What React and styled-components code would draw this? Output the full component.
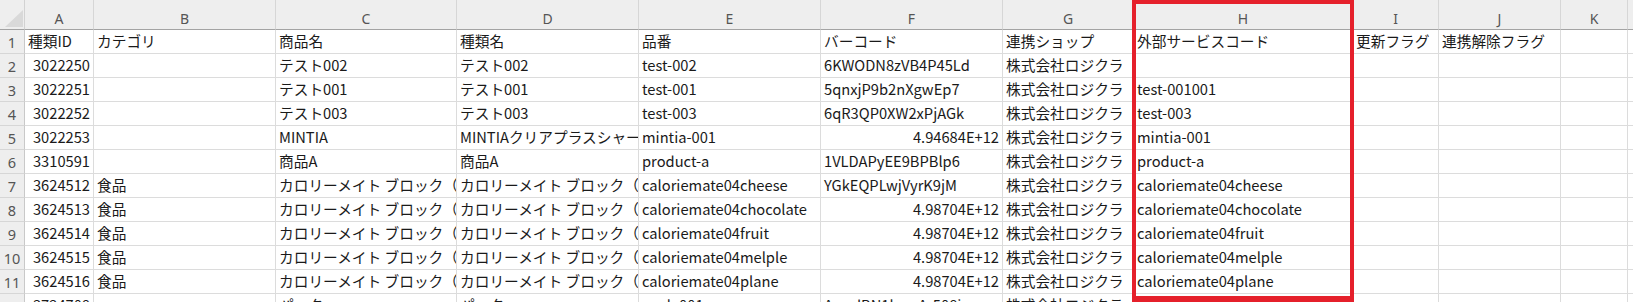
import React from 'react';
import styled, { createGlobalStyle } from 'styled-components';

const GlobalStyle = createGlobalStyle`
  html, body {
    margin: 0;
    padding: 0;
    background: #fff;
  }
  body {
    font-family: "Noto Sans CJK JP", "Noto Sans", sans-serif;
  }
`;

const COLS = [69, 182, 181, 182, 182, 182, 131, 219, 86, 122, 67];
// L is only a sliver at the right edge, its letter is out of view
const LETTERS = ['A', 'B', 'C', 'D', 'E', 'F', 'G', 'H', 'I', 'J', 'K', ''];

// r = right aligned (numbers)
const ROWS = [
  ['種類ID', 'カテゴリ', '商品名', '種類名', '品番', 'バーコード', '連携ショップ', '外部サービスコード', '更新フラグ', '連携解除フラグ'],
  [{ v: '3022250', r: true }, '', 'テスト002', 'テスト002', 'test-002', '6KWODN8zVB4P45Ld', '株式会社ロジクラ', ''],
  [{ v: '3022251', r: true }, '', 'テスト001', 'テスト001', 'test-001', '5qnxjP9b2nXgwEp7', '株式会社ロジクラ', 'test-001001'],
  [{ v: '3022252', r: true }, '', 'テスト003', 'テスト003', 'test-003', '6qR3QP0XW2xPjAGk', '株式会社ロジクラ', 'test-003'],
  [{ v: '3022253', r: true }, '', 'MINTIA', 'MINTIAクリアプラスシャープミント', 'mintia-001', { v: '4.94684E+12', r: true }, '株式会社ロジクラ', 'mintia-001'],
  [{ v: '3310591', r: true }, '', '商品A', '商品A', 'product-a', '1VLDAPyEE9BPBlp6', '株式会社ロジクラ', 'product-a'],
  [{ v: '3624512', r: true }, '食品', 'カロリーメイト ブロック（チーズ味）', 'カロリーメイト ブロック（チーズ味）', 'caloriemate04cheese', 'YGkEQPLwjVyrK9jM', '株式会社ロジクラ', 'caloriemate04cheese'],
  [{ v: '3624513', r: true }, '食品', 'カロリーメイト ブロック（チョコレート味）', 'カロリーメイト ブロック（チョコレート味）', 'caloriemate04chocolate', { v: '4.98704E+12', r: true }, '株式会社ロジクラ', 'caloriemate04chocolate'],
  [{ v: '3624514', r: true }, '食品', 'カロリーメイト ブロック（フルーツ味）', 'カロリーメイト ブロック（フルーツ味）', 'caloriemate04fruit', { v: '4.98704E+12', r: true }, '株式会社ロジクラ', 'caloriemate04fruit'],
  [{ v: '3624515', r: true }, '食品', 'カロリーメイト ブロック（メープル味）', 'カロリーメイト ブロック（メープル味）', 'caloriemate04melple', { v: '4.98704E+12', r: true }, '株式会社ロジクラ', 'caloriemate04melple'],
  [{ v: '3624516', r: true }, '食品', 'カロリーメイト ブロック（プレーン味）', 'カロリーメイト ブロック（プレーン味）', 'caloriemate04plane', { v: '4.98704E+12', r: true }, '株式会社ロジクラ', 'caloriemate04plane'],
  [{ v: '3724708', r: true }, '', 'パック', 'パック', 'pack-001', 'AswdBN1kwuAr508i', '株式会社ロジクラ', ''],
];

const Viewport = styled.div`
  position: relative;
  width: 1633px;
  height: 302px;
  overflow: hidden;
  background: #fff;
`;

const Sheet = styled.div`
  display: grid;
  grid-template-columns: 25px ${COLS.map((w) => `${w}px`).join(' ')} 1fr;
  grid-auto-rows: 24px;
  grid-template-rows: 30px;
`;

const Corner = styled.div`
  position: relative;
  background: #eeeeee;
  border-right: 1px solid #d2d2d2;
  border-bottom: 1px solid #a3a3a3;
  box-sizing: border-box;
`;

const CornerTriangle = styled.svg`
  position: absolute;
  left: 5px;
  top: 10px;
`;

const ColHead = styled.div`
  background: #eeeeee;
  border-right: 1px solid #d6d6d6;
  border-bottom: 1px solid #a3a3a3;
  box-sizing: border-box;
  display: flex;
  align-items: center;
  justify-content: center;
  padding-top: 7px;
  font-family: "Noto Sans", "Liberation Sans", sans-serif;
  font-size: 14px;
  color: #555;
`;

const RowHead = styled.div`
  background: #eeeeee;
  border-right: 1px solid #c9c9c9;
  border-bottom: 1px solid #d6d6d6;
  box-sizing: border-box;
  display: flex;
  align-items: center;
  justify-content: center;
  font-family: "Noto Sans", "Liberation Sans", sans-serif;
  font-size: 14.5px;
  color: #555;
`;

const Cell = styled.div`
  border-right: 1px solid #dcdcdc;
  border-bottom: 1px solid #dcdcdc;
  box-sizing: border-box;
  overflow: hidden;
  white-space: nowrap;
  display: flex;
  align-items: center;
  justify-content: ${(p) => (p.$right ? 'flex-end' : 'flex-start')};
  padding: 0 3px;
  font-size: 14.7px;
  line-height: 1;
  color: #1a1a1a;
`;

const Highlight = styled.div`
  position: absolute;
  left: 1132px;
  top: 0;
  width: 222px;
  height: 302px;
  box-sizing: border-box;
  border: 4px solid #e5202b;
  border-bottom-width: 6px;
  pointer-events: none;
`;

const App = () => {
  return (
    <>
      <GlobalStyle />
      <Viewport>
        <Sheet>
          <Corner>
            <CornerTriangle width="18" height="17" viewBox="0 0 18 17">
              <polygon points="18,0 18,17 0,17" fill="#d9d9d9" />
            </CornerTriangle>
          </Corner>
          {LETTERS.map((l, j) => (
            <ColHead key={j}>{l}</ColHead>
          ))}
          {ROWS.map((row, i) => (
            <React.Fragment key={i}>
              <RowHead>{i + 1}</RowHead>
              {LETTERS.map((l, j) => {
                const c = row[j];
                const val = c && typeof c === 'object' ? c.v : c || '';
                const right = c && typeof c === 'object' && c.r;
                return (
                  <Cell key={j} $right={right}>
                    {val}
                  </Cell>
                );
              })}
            </React.Fragment>
          ))}
        </Sheet>
        <Highlight />
      </Viewport>
    </>
  );
};

export default App;
